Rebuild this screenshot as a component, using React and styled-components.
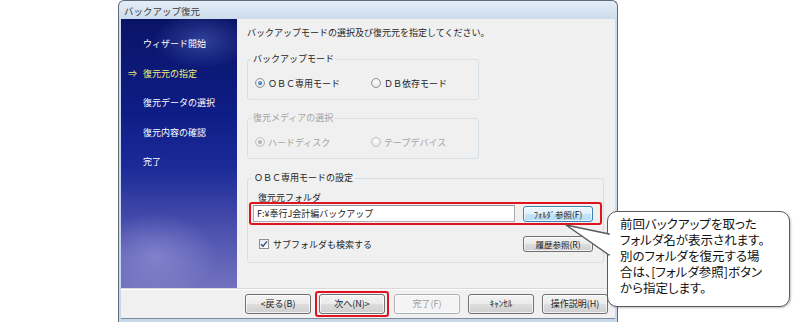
import React from 'react'
import styled, { createGlobalStyle } from 'styled-components'

const Global = createGlobalStyle`
  html, body { margin: 0; padding: 0; background: #fff; }
  body { font-family: "Noto Sans CJK JP", "Liberation Sans", sans-serif; }
`

const Page = styled.div`
  position: relative;
  width: 800px;
  height: 322px;
  overflow: hidden;
  display: flex;
  padding-left: 118px;
  box-sizing: border-box;
`

const Win = styled.div`
  width: 500px;
  height: 322px;
  box-sizing: border-box;
  border: 1px solid #5e6a78;
  border-bottom: none;
  border-radius: 6px 6px 0 0;
  background: linear-gradient(180deg, #e4edf7 0px, #cddcec 18px, #c8d8ea 100%);
  display: flex;
  flex-direction: column;
  padding: 0 2px 3px 2px;
`

const TitleBar = styled.div`
  height: 18px;
  line-height: 20px;
  padding-left: 3px;
  font-size: 9.5px;
  color: #3c3c3c;
`

const Client = styled.div`
  flex: 1;
  display: flex;
  flex-direction: column;
  background: #f0f0f0;
  border-bottom: 1px solid #7d8a99;
`

const Body = styled.div`
  height: 269px;
  display: flex;
`

const Side = styled.div`
  width: 116px;
  flex-shrink: 0;
  padding: 10px 0 0 22px;
  box-sizing: border-box;
  background:
    radial-gradient(ellipse 70px 40px at 70% 8%, rgba(120,140,230,0.35), rgba(0,0,0,0) 70%),
    radial-gradient(ellipse 90px 60px at 30% 88%, rgba(170,170,230,0.45), rgba(0,0,0,0) 70%),
    linear-gradient(180deg, #0a1466 0%, #0e1d86 35%, #1b2a98 55%, #4b50ad 78%, #7272bf 100%);
`

const Step = styled.div`
  height: 29.5px;
  display: flex;
  align-items: center;
  font-size: 9px;
  color: ${p => (p.$active ? '#f4f17a' : '#ffffff')};
  white-space: nowrap;
`

const Arrow = styled.span`
  width: 15px;
  margin-left: -15px;
  font-size: 9px;
`

const Content = styled.div`
  flex: 1;
  padding: 7px 11px 0 10px;
  display: flex;
  flex-direction: column;
  font-size: 9px;
  color: #1e1e1e;
`

const Heading = styled.div`
  line-height: 14px;
  white-space: nowrap;
`

const Group = styled.fieldset`
  margin: ${p => p.$top}px 0 0 0;
  width: ${p => p.$w}px;
  box-sizing: border-box;
  border: 1px solid #d5dfe5;
  border-radius: 3px;
  padding: ${p => p.$pad};
  min-inline-size: 0;
`

const Legend = styled.legend`
  padding: 0 2px;
  margin-left: 3px;
  line-height: 14px;
  font-size: 9px;
  color: ${p => (p.$off ? '#a3a3a3' : '#1e1e1e')};
`

const RadioRow = styled.div`
  display: grid;
  grid-template-columns: 116px auto;
  height: 16px;
  align-items: center;
  padding-left: 7px;
`

const RadioItem = styled.label`
  display: flex;
  align-items: center;
  gap: 3px;
  color: ${p => (p.$off ? '#a3a3a3' : '#1e1e1e')};
  white-space: nowrap;
`

const RadioDot = styled.span`
  width: 10px;
  height: 10px;
  border-radius: 50%;
  box-sizing: border-box;
  border: 1px solid ${p => (p.$off ? '#c4c4c4' : '#8f9296')};
  background: radial-gradient(circle at 50% 40%, #ffffff 0%, #e6e6e6 70%, #d0d0d0 100%);
  display: flex;
  align-items: center;
  justify-content: center;
  &::after {
    content: '';
    width: 4px;
    height: 4px;
    border-radius: 50%;
    display: ${p => (p.$on ? 'block' : 'none')};
    background: ${p => (p.$off ? '#b3b3b3' : 'radial-gradient(circle at 40% 35%, #7fb6ee, #1c5a9e 80%)')};
  }
`

const FieldLabel = styled.div`
  line-height: 14px;
  padding-left: 9px;
  color: #1e1e1e;
`

const RedBox = styled.div`
  position: relative;
  margin-top: -3px;
  border: 2px solid #e0141e;
  border-radius: 3px;
  padding: 1px 7px 1px 2px;
  display: flex;
  align-items: center;
  justify-content: space-between;
`

const TextInput = styled.div`
  width: 262px;
  height: 17px;
  box-sizing: border-box;
  border: 1px solid #abadb3;
  border-top-color: #8d9199;
  background: #fff;
  line-height: 15px;
  padding-left: 3px;
  font-size: 9px;
  color: #1a1a1a;
`

const SmallButton = styled.div`
  width: 70px;
  height: 16px;
  box-sizing: border-box;
  border: 1px solid ${p => (p.$focus ? '#3c7fb1' : '#707070')};
  border-radius: 3px;
  background: ${p =>
    p.$focus
      ? 'linear-gradient(180deg, #edf7fd 0%, #dff1fc 50%, #c4e5f9 51%, #b3dcf6 100%)'
      : 'linear-gradient(180deg, #f3f3f3 0%, #ebebeb 50%, #dddddd 51%, #d0d0d0 100%)'};
  box-shadow: inset 0 0 0 1px rgba(255,255,255,0.7);
  font-size: 8.5px;
  line-height: 14px;
  text-align: center;
  color: #1a1a1a;
  white-space: nowrap;
`

const CheckRow = styled.div`
  margin: 11px 9px 0 10px;
  height: 16px;
  display: flex;
  align-items: center;
  justify-content: space-between;
`

const CheckLabel = styled.label`
  display: flex;
  align-items: center;
  gap: 4px;
`

const CheckBox = styled.span`
  width: 10px;
  height: 10px;
  box-sizing: border-box;
  border: 1px solid #8f8f8f;
  background: linear-gradient(135deg, #e8e8e8, #ffffff);
  display: flex;
  align-items: center;
  justify-content: center;
  svg { display: block; }
`

const Footer = styled.div`
  flex: 1;
  border-top: 1px solid #d9d9d9;
  box-shadow: inset 0 1px 0 #ffffff;
  display: flex;
  align-items: center;
  padding-left: 124px;
  gap: 8px;
`

const NavButton = styled.div`
  width: 66px;
  height: 20px;
  box-sizing: border-box;
  border: 1px solid ${p => (p.$off ? '#adb2b5' : '#707070')};
  border-radius: 3px;
  background: ${p =>
    p.$off
      ? '#f4f4f4'
      : 'linear-gradient(180deg, #f3f3f3 0%, #ebebeb 50%, #dddddd 51%, #cfcfcf 100%)'};
  box-shadow: inset 0 0 0 1px rgba(255,255,255,0.7);
  font-size: 9px;
  line-height: 18px;
  text-align: center;
  color: ${p => (p.$off ? '#9a9a9a' : '#1a1a1a')};
  white-space: nowrap;
`

const RedWrap = styled.div`
  position: relative;
  border: 2px solid #e0141e;
  border-radius: 3px;
  padding: 1px 2px;
  margin: 0 -3px 0 -4px;
`

const Callout = styled.div`
  position: absolute;
  left: 607px;
  top: 211px;
  width: 183px;
  height: 96px;
  box-sizing: border-box;
  border: 1.5px solid #5a5a5a;
  border-radius: 10px;
  background: #fff;
  box-shadow: 1px 1px 2px rgba(0,0,0,0.25);
  padding: 4px 0 0 12px;
  font-size: 12.5px;
  line-height: 16px;
  color: #111;
  font-feature-settings: "palt";
`

const Tail = styled.svg`
  position: absolute;
  left: -42px;
  top: 13px;
  overflow: visible;
`

const steps = ['ウィザード開始', '復元元の指定', '復元データの選択', '復元内容の確認', '完了']

export default function App() {
  return (
    <>
      <Global />
      <Page>
        <Win>
          <TitleBar>バックアップ復元</TitleBar>
          <Client>
            <Body>
              <Side>
                {steps.map((s, i) => (
                  <Step key={s} $active={i === 1}>
                    {i === 1 && <Arrow>⇒</Arrow>}
                    {s}
                  </Step>
                ))}
              </Side>
              <Content>
                <Heading>バックアップモードの選択及び復元元を指定してください。</Heading>
                <Group $top={12} $w={232} $pad="9px 0 8px 0">
                  <Legend>バックアップモード</Legend>
                  <RadioRow>
                    <RadioItem><RadioDot $on />ＯＢＣ専用モード</RadioItem>
                    <RadioItem><RadioDot />ＤＢ依存モード</RadioItem>
                  </RadioRow>
                </Group>
                <Group $top={11} $w={232} $pad="9px 0 8px 0">
                  <Legend $off>復元メディアの選択</Legend>
                  <RadioRow>
                    <RadioItem $off><RadioDot $on $off />ハードディスク</RadioItem>
                    <RadioItem $off><RadioDot $off />テープデバイス</RadioItem>
                  </RadioRow>
                </Group>
                <Group $top={12} $w={357} $pad="6px 1px 10px 1px">
                  <Legend>ＯＢＣ専用モードの設定</Legend>
                  <FieldLabel>復元元フォルダ</FieldLabel>
                  <RedBox>
                    <TextInput>F:¥奉行J会計編バックアップ</TextInput>
                    <SmallButton $focus>ﾌｫﾙﾀﾞ参照(F)</SmallButton>
                  </RedBox>
                  <CheckRow>
                    <CheckLabel>
                      <CheckBox>
                        <svg width="8" height="8" viewBox="0 0 8 8">
                          <path d="M1 4.2 L3 6.3 L7 1.4" fill="none" stroke="#2b4f8c" strokeWidth="1.4" />
                        </svg>
                      </CheckBox>
                      サブフォルダも検索する
                    </CheckLabel>
                    <SmallButton>履歴参照(R)</SmallButton>
                  </CheckRow>
                </Group>
              </Content>
            </Body>
            <Footer>
              <NavButton>&lt;戻る(B)</NavButton>
              <RedWrap><NavButton>次へ(N)&gt;</NavButton></RedWrap>
              <NavButton $off>完了(F)</NavButton>
              <NavButton>ｷｬﾝｾﾙ</NavButton>
              <NavButton>操作説明(H)</NavButton>
            </Footer>
          </Client>
        </Win>
        <Callout>
          <Tail width="44" height="32">
            <polygon points="0,0 43,9 43,30" fill="#fff" stroke="#5a5a5a" strokeWidth="1.5" strokeLinejoin="round" />
            <rect x="42" y="10" width="4" height="19" fill="#fff" />
          </Tail>
          前回バックアップを取った<br />
          フォルダ名が表示されます。<br />
          別のフォルダを復元する場<br />
          合は、[フォルダ参照]ボタン<br />
          から指定します。
        </Callout>
      </Page>
    </>
  )
}
